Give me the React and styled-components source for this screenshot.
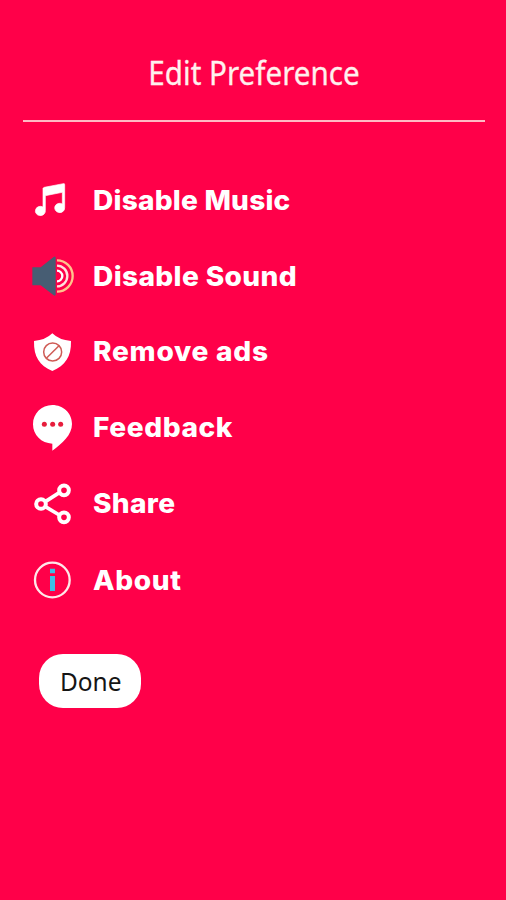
import React from 'react';
import styled, { createGlobalStyle } from 'styled-components';

const GlobalStyle = createGlobalStyle`
  * { box-sizing: border-box; }
  body { margin: 0; background: #ff0049; }
`;

const Screen = styled.main`
  display: flex;
  flex-direction: column;
  min-height: 900px;
  background: #ff0049;
  color: #fff;
`;

const Header = styled.header`
  height: 122px;
  margin: 0 21px 0 23px;
  padding-top: 51px;
  border-bottom: 2px solid #ffb9c4;
`;

const Title = styled.h1`
  margin: 0;
  font: 400 32px/44px 'Noto Sans', sans-serif;
  text-align: center;
  color: #fff0ee;
  transform: scaleX(0.925);
  -webkit-text-stroke: 0.3px #fff0ee;
`;

const Menu = styled.ul`
  margin: 40px 0 0;
  padding: 0 0 0 20px;
  list-style: none;
`;

const MenuItem = styled.li`
  display: flex;
  align-items: center;
  height: 76px;
  cursor: pointer;
`;

const Icon = styled.svg`
  flex: none;
  width: 70px;
  height: 60px;
  fill: none;
`;

const Label = styled.span`
  margin-left: 3px;
  padding-top: ${props => props.$drop || 0}px;
  font: 800 27px/36px Inter, sans-serif;
  letter-spacing: ${props => props.$spacing || 0}px;
  white-space: nowrap;
  transform: scaleX(1.04);
  transform-origin: left;
`;

const DoneButton = styled.button`
  width: 102px;
  height: 54px;
  margin: 36px 0 0 39px;
  padding: 1px 0 0 1px;
  border: 0;
  border-radius: 24px;
  background: #fff;
  color: #151515;
  font: 400 26px/53px 'Noto Sans', sans-serif;
`;

const DoneText = styled.span`
  display: inline-block;
  transform: scaleX(0.94);
`;

const MusicIcon = () => (
  <Icon viewBox='0 0 210 180'>
    <path fill='#fff' stroke='#fff' strokeWidth='2' d='M69 55Q70 53 73 52L130 41Q134 40 134 44V113A15 14 0 1 1 127 102V67L76 77V121A15 14 0 1 1 69 111Z' />
  </Icon>
);

const SoundIcon = () => (
  <Icon viewBox='0 0 210 180'>
    <path stroke='#ffc38c' strokeWidth='7' d='M111 43A47 47 0 0 1 111 137' />
    <path stroke='#ffe1dc' strokeWidth='7' d='M111 59A31 31 0 0 1 111 121' />
    <path stroke='#fff' strokeWidth='7' d='M111 74A16 16 0 0 1 111 106' />
    <path fill='#475d73' d='M37 64H62L101 33Q107 29 107 36V145Q107 152 101 148L62 118H37Z' />
  </Icon>
);

const ShieldIcon = () => (
  <Icon viewBox='0 0 210 180'>
    <path fill='#fff' d='M97 34Q117 54 153 57C154 105 136 130 97 147C58 130 41 105 42 57Q77 54 97 34Z' />
    <g stroke='#cf5b55' strokeWidth='4.5'>
      <circle cx='98' cy='90' r='27' />
      <path d='M79 109L117 71' />
    </g>
  </Icon>
);

const FeedbackIcon = () => (
  <Icon viewBox='0 0 210 180'>
    <path fill='#fff' d='M97 21C130 21 156 46 156 78C156 111 126 137 97 158V137C64 136 39 111 39 79C39 46 65 21 97 21Z' />
    <g fill='#e71d3c'>
      <circle cx='73' cy='79' r='7.5' />
      <circle cx='98' cy='79' r='7.5' />
      <circle cx='122' cy='79' r='7.5' />
    </g>
  </Icon>
);

const ShareIcon = () => (
  <Icon viewBox='0 0 210 180'>
    <g stroke='#fff' strokeWidth='12'>
      <path d='M76 83L118 56M76 98L118 123' strokeWidth='11' />
      <circle cx='63' cy='90' r='14.5' />
      <circle cx='132' cy='49' r='14.5' />
      <circle cx='132' cy='130' r='14.5' />
    </g>
  </Icon>
);

const InfoIcon = () => (
  <Icon viewBox='0 0 210 180'>
    <circle cx='97' cy='90' r='52' stroke='#ffe7e9' strokeWidth='7' />
    <path fill='#3cbfe5' d='M90 56H105V70H90ZM90 78H105V123H90Z' />
  </Icon>
);

const items = [
  { label: 'Disable Music', icon: MusicIcon, spacing: 0.2, drop: 2 },
  { label: 'Disable Sound', icon: SoundIcon, spacing: 0.35, drop: 2 },
  { label: 'Remove ads', icon: ShieldIcon, spacing: 0.7 },
  { label: 'Feedback', icon: FeedbackIcon, spacing: 0.55 },
  { label: 'Share', icon: ShareIcon, spacing: 0.3 },
  { label: 'About', icon: InfoIcon, spacing: 0.6, drop: 2 },
];

const App = () => (
  <Screen>
    <GlobalStyle />
    <Header>
      <Title>Edit Preference</Title>
    </Header>
    <Menu>
      {items.map(({ label, icon: ItemIcon, spacing, drop }) => (
        <MenuItem key={label}>
          <ItemIcon />
          <Label $spacing={spacing} $drop={drop}>{label}</Label>
        </MenuItem>
      ))}
    </Menu>
    <DoneButton type='button'>
      <DoneText>Done</DoneText>
    </DoneButton>
  </Screen>
);

export default App;
